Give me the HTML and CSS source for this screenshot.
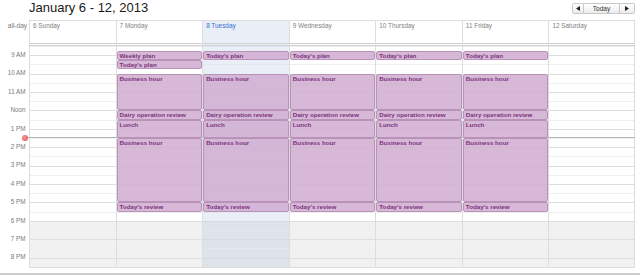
FILE: index.html
```html
<!DOCTYPE html>
<html lang="en">
<head>
    <meta charset="UTF-8">
    <title>Week Calendar</title>
    <link rel="stylesheet" href="styles.css">
</head>
<body>
    <div class="toolbar">
        <h1 class="title">January 6 - 12, 2013</h1>
        <div class="nav">
            <button class="nav-btn prev"><svg width="4" height="5" viewBox="0 0 4 5"><path d="M4 0 L0 2.5 L4 5 Z" fill="#222"/></svg></button>
            <button class="nav-btn today">Today</button>
            <button class="nav-btn next"><svg width="4" height="5" viewBox="0 0 4 5"><path d="M0 0 L4 2.5 L0 5 Z" fill="#222"/></svg></button>
        </div>
    </div>

    <div class="calendar">
        <!-- day headers -->
        <div class="head">
            <div class="head-gutter">all-day</div>
            <div class="head-day">6 Sunday</div>
            <div class="head-day">7 Monday</div>
            <div class="head-day is-today">8 Tuesday</div>
            <div class="head-day">9 Wednesday</div>
            <div class="head-day">10 Thursday</div>
            <div class="head-day">11 Friday</div>
            <div class="head-day last">12 Saturday</div>
        </div>

        <!-- time grid, 8:30 AM to 8:30 PM -->
        <div class="grid">
            <div class="times">
                <div class="time">9 AM</div>
                <div class="time">10 AM</div>
                <div class="time">11 AM</div>
                <div class="time">Noon</div>
                <div class="time">1 PM</div>
                <div class="time">2 PM</div>
                <div class="time">3 PM</div>
                <div class="time">4 PM</div>
                <div class="time">5 PM</div>
                <div class="time">6 PM</div>
                <div class="time">7 PM</div>
                <div class="time">8 PM</div>
            </div>

            <div class="day"></div>

            <div class="day">
                <div class="event" style="top:4.6px;height:9.2px">Weekly plan</div>
                <div class="event" style="top:13.8px;height:9.2px">Today's plan</div>
                <div class="event" style="top:27.6px;height:36.8px">Business hour</div>
                <div class="event" style="top:64.4px;height:9.2px">Dairy operation review</div>
                <div class="event" style="top:73.6px;height:18.4px">Lunch</div>
                <div class="event" style="top:92px;height:64.4px">Business hour</div>
                <div class="event" style="top:156.4px;height:9.2px">Today's review</div>
            </div>

            <div class="day is-today">
                <div class="event" style="top:4.6px;height:9.2px">Today's plan</div>
                <div class="event" style="top:27.6px;height:36.8px">Business hour</div>
                <div class="event" style="top:64.4px;height:9.2px">Dairy operation review</div>
                <div class="event" style="top:73.6px;height:18.4px">Lunch</div>
                <div class="event" style="top:92px;height:64.4px">Business hour</div>
                <div class="event" style="top:156.4px;height:9.2px">Today's review</div>
            </div>

            <div class="day">
                <div class="event" style="top:4.6px;height:9.2px">Today's plan</div>
                <div class="event" style="top:27.6px;height:36.8px">Business hour</div>
                <div class="event" style="top:64.4px;height:9.2px">Dairy operation review</div>
                <div class="event" style="top:73.6px;height:18.4px">Lunch</div>
                <div class="event" style="top:92px;height:64.4px">Business hour</div>
                <div class="event" style="top:156.4px;height:9.2px">Today's review</div>
            </div>

            <div class="day">
                <div class="event" style="top:4.6px;height:9.2px">Today's plan</div>
                <div class="event" style="top:27.6px;height:36.8px">Business hour</div>
                <div class="event" style="top:64.4px;height:9.2px">Dairy operation review</div>
                <div class="event" style="top:73.6px;height:18.4px">Lunch</div>
                <div class="event" style="top:92px;height:64.4px">Business hour</div>
                <div class="event" style="top:156.4px;height:9.2px">Today's review</div>
            </div>

            <div class="day">
                <div class="event" style="top:4.6px;height:9.2px">Today's plan</div>
                <div class="event" style="top:27.6px;height:36.8px">Business hour</div>
                <div class="event" style="top:64.4px;height:9.2px">Dairy operation review</div>
                <div class="event" style="top:73.6px;height:18.4px">Lunch</div>
                <div class="event" style="top:92px;height:64.4px">Business hour</div>
                <div class="event" style="top:156.4px;height:9.2px">Today's review</div>
            </div>

            <div class="day last"></div>

            <!-- current time marker -->
            <div class="now-line"></div>
            <div class="now-dot"></div>
        </div>
    </div>

    <div class="bottom-bar"></div>
</body>
</html>
```

FILE: styles.css
```css
body {
    margin: 0;
    font-family: "Liberation Sans", Arial, Helvetica, sans-serif;
    background-color: #ffffff;
    color: #222;
}
/* Toolbar */
.toolbar {
    display: flex;
    justify-content: space-between;
    align-items: flex-start;
    height: 20px;
}
.title {
    margin: 0 0 0 29px;
    font-size: 13px;
    line-height: 16px;
    font-weight: normal;
    color: #1a1a1a;
}
.nav {
    display: flex;
    margin: 3px 5px 0 0;
    height: 11px;
}
.nav-btn {
    display: flex;
    align-items: center;
    justify-content: center;
    height: 11px;
    padding: 0;
    margin: 0;
    border: 1px solid #c9c9c9;
    background: linear-gradient(#ffffff, #ececec);
    font-family: inherit;
    font-size: 6.5px;
    color: #333;
}
.nav-btn + .nav-btn {
    border-left: none;
}
.prev {
    width: 12px;
    border-radius: 2px 0 0 2px;
}
.today {
    width: 36px;
}
.next {
    width: 15px;
    border-radius: 0 2px 2px 0;
}
/* Calendar */
.calendar {
    width: 635px;
}
.head, .grid {
    display: grid;
    grid-template-columns: 29px repeat(7, 1fr);
}
.head-gutter {
    padding: 2px 2px 0 0;
    text-align: right;
    font-size: 6.5px;
    line-height: 8px;
    color: #777;
}
.head-day {
    height: 26px;
    box-sizing: border-box;
    padding: 1px 3px 0;
    border-top: 1px solid #dddddd;
    border-left: 1px solid #dddddd;
    border-bottom: 3px double #cfcfcf;
    font-size: 6.4px;
    line-height: 8px;
    color: #808080;
}
.head-day.is-today {
    background-color: #e9eef7;
    color: #3a6fd2;
}
.head-day.last, .day.last {
    border-right: 1px solid #dddddd;
}
.grid {
    position: relative;
}
.times {
    display: flex;
    flex-direction: column;
}
.time {
    height: 18.4px;
    line-height: 18.4px;
    padding-right: 3.5px;
    text-align: right;
    font-size: 6.3px;
    color: #7a7a7a;
}
.day {
    position: relative;
    height: 220.8px;
    border-left: 1px solid #dddddd;
    border-bottom: 1px solid #dddddd;
    background:
        repeating-linear-gradient(to bottom, #efefef 0 1px, transparent 1px 9.2px, #dedede 9.2px 10.2px, transparent 10.2px 18.4px),
        linear-gradient(to bottom, transparent 174.8px, #f1f1f1 174.8px),
        #ffffff;
}
.day.is-today {
    background:
        repeating-linear-gradient(to bottom, #e3e8f0 0 1px, transparent 1px 9.2px, #d6dbe3 9.2px 10.2px, transparent 10.2px 18.4px),
        linear-gradient(to bottom, transparent 174.8px, #dee2ea 174.8px),
        #e9eef7;
}
.event {
    position: absolute;
    left: 0;
    right: 0;
    z-index: 2;
    box-sizing: border-box;
    padding: 0 2px;
    border: 1px solid #b892b9;
    border-radius: 2px;
    background-color: rgba(208, 174, 208, 0.86);
    font-size: 6.2px;
    line-height: 8px;
    font-weight: bold;
    color: #7b327e;
    white-space: nowrap;
    overflow: hidden;
}
/* Current time marker */
.now-line {
    position: absolute;
    top: 91px;
    left: 24px;
    right: 0;
    height: 1px;
    background-color: #b5b5b5;
    z-index: 1;
}
.now-dot {
    position: absolute;
    top: 88.5px;
    left: 21.5px;
    width: 6px;
    height: 6px;
    border-radius: 50%;
    background: radial-gradient(circle at 40% 40%, #f59a9a, #e04848);
    z-index: 3;
}
.bottom-bar {
    margin-top: 5px;
    height: 2px;
    background-color: #cccccc;
}
```
